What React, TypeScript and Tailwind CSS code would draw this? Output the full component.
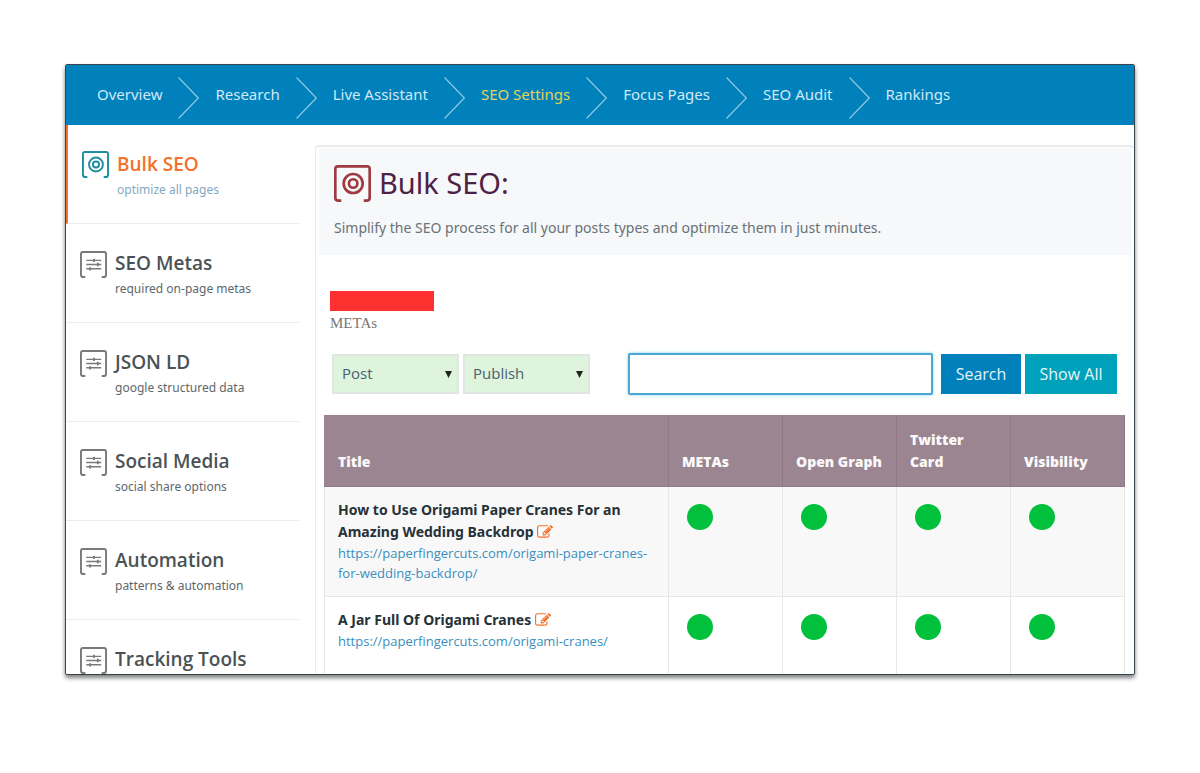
import { Fragment } from "react";
import { clsx } from "clsx";

const steps = ["Overview", "Research", "Live Assistant", "SEO Settings", "Focus Pages", "SEO Audit", "Rankings"];
const activeStep = "SEO Settings";

const sections = [
  { title: "Bulk SEO", note: "optimize all pages", active: true },
  { title: "SEO Metas", note: "required on-page metas" },
  { title: "JSON LD", note: "google structured data" },
  { title: "Social Media", note: "social share options" },
  { title: "Automation", note: "patterns & automation" },
  { title: "Tracking Tools" },
];

const checks = ["METAs", "Open Graph", "Twitter Card", "Visibility"];

const posts = [
  {
    title: "How to Use Origami Paper Cranes For an Amazing Wedding Backdrop",
    url: "https://paperfingercuts.com/origami-paper-cranes-for-wedding-backdrop/",
  },
  { title: "A Jar Full Of Origami Cranes", url: "https://paperfingercuts.com/origami-cranes/" },
];

function Chevron() {
  return (
    <svg className="h-[42px] w-[21px] shrink-0" viewBox="0 0 21 42" fill="none" stroke="#8cc6e0" strokeWidth="1.200" aria-hidden="true">
      <path d="M0.5 0.5 L20.3 21 L0.5 41.5" />
    </svg>
  );
}

function TargetIcon({ className }: { className: string }) {
  return (
    <svg className={className} viewBox="0 0 28 28" fill="none" stroke="currentColor" aria-hidden="true">
      <path d="M5.500 27H3.500Q1 27 1 24.500V3Q1 1 3 1H25Q27 1 27 3V24.500Q27 27 24.500 27H22.500" strokeWidth="2" />
      <circle cx="14.500" cy="14" r="7.200" strokeWidth="2" />
      <circle cx="14.500" cy="14" r="3.200" strokeWidth="2" />
    </svg>
  );
}

function SlidersIcon({ className }: { className: string }) {
  return (
    <svg className={className} viewBox="0 0 28 28" fill="none" stroke="currentColor" aria-hidden="true">
      <path d="M5.500 27H3.500Q1 27 1 24.500V3Q1 1 3 1H25Q27 1 27 3V24.500Q27 27 24.500 27H22.500" strokeWidth="2" />
      <path d="M6.500 9.700H22M6.500 14H22M6.500 18.500H22" strokeWidth="1.500" />
      <path d="M14.500 8V11.500M18.500 12.300V15.800M10.500 16.800V20.300" strokeWidth="1.900" />
    </svg>
  );
}

function EditIcon() {
  return (
    <svg className="inline-block size-4 align-[-3px]" viewBox="0 0 1792 1792" fill="currentColor" aria-hidden="true">
      <path d="M888 1184l116-116-152-152-116 116v56h96v96h56zm440-720q-16-16-33 1l-350 350q-17 17-1 33t33-1l350-350q17-17 1-33zm80 594v190q0 119-84.500 203.500t-203.500 84.500h-832q-119 0-203.500-84.500t-84.500-203.500v-832q0-119 84.500-203.500t203.500-84.500h832q63 0 117 25 15 7 18 23 3 17-9 29l-49 49q-14 14-32 8-23-6-45-6h-832q-66 0-113 47t-47 113v832q0 66 47 113t113 47h832q66 0 113-47t47-113v-126q0-13 9-22l64-64q15-15 35-7t20 29zm-96-738l288 288-672 672h-288v-288zm444 132l-92 92-288-288 92-92q28-28 68-28t68 28l152 152q28 28 28 68t-28 68z" />
    </svg>
  );
}

function Picker({ label, options }: { label: string; options: string[] }) {
  return (
    <div className="grid w-[127px] items-center">
      <select
        aria-label={label}
        className="col-start-1 row-start-1 h-10 w-full appearance-none border-2 border-[#e0e6e0] bg-[#def4dd] pb-[2px] pl-2 text-[15px] text-[#4b6070]"
      >
        {options.map((option) => (
          <option key={option}>{option}</option>
        ))}
      </select>
      <svg className="pointer-events-none col-start-1 row-start-1 mr-[7px] h-[7px] w-[7px] justify-self-end" viewBox="0 0 7 7" fill="#222" aria-hidden="true">
        <path d="M0 0H7L3.500 7Z" />
      </svg>
    </div>
  );
}

export default function App() {
  return (
    <div className="flex h-screen flex-col bg-white px-[65px] pt-16 pb-[98px] font-['Open_Sans',sans-serif]">
      <div className="flex min-h-0 flex-1 flex-col overflow-hidden rounded-xs border border-[#38444c] bg-white shadow-[0_3px_4px_rgba(0,0,0,0.5)]">
        <nav
          aria-label="Steps"
          className="flex h-[60px] shrink-0 items-center gap-4 overflow-hidden bg-[#0081bb] pl-[31px] font-['Noto_Sans',sans-serif] text-[15px] text-[#cfe9f5]"
        >
          {steps.map((step, i) => (
            <Fragment key={step}>
              {i > 0 && (
                <div className="pt-[6px]">
                  <Chevron />
                </div>
              )}
              <a href="#" className={clsx("pb-[2px] whitespace-nowrap", step === activeStep && "text-[#e2d35a]")}>
                {step}
              </a>
            </Fragment>
          ))}
        </nav>

        <div className="flex min-h-0 flex-1">
          <aside className="w-[233px] shrink-0">
            {sections.map(({ title, note, active }) => (
              <a
                key={title}
                href="#"
                className={clsx(
                  "flex h-[99px] gap-2 border-b border-b-[#ececec] pt-[25px] pl-[14px]",
                  active && "border-l-2 border-l-[#f5702a]",
                )}
              >
                {active ? (
                  <TargetIcon className="mt-px size-[27px] shrink-0 text-[#1d8fa0]" />
                ) : (
                  <SlidersIcon className="mt-[2px] size-[27px] shrink-0 text-[#7a7a7a]" />
                )}
                <span className="flex flex-col">
                  <span className={clsx("text-[19px] leading-7 font-semibold", active ? "text-[#f5702a]" : "text-[#4a5256]")}>
                    {title}
                  </span>
                  {note && (
                    <span className={clsx("font-['Noto_Sans',sans-serif] text-[12px] leading-6", active ? "text-[#83a8c0]" : "text-[#5d676b]")}>
                      {note}
                    </span>
                  )}
                </span>
              </a>
            ))}
          </aside>

          <main className="mt-5 ml-4 min-w-0 flex-1 rounded-t-sm border-t-2 border-l border-[#ebebeb] px-[3px] pt-px">
            <header className="h-[107px] bg-[#f7f8fa] pt-[15px] pl-[15px] font-['Noto_Sans',sans-serif]">
              <h1 className="flex items-center gap-2 text-[29px] leading-10 text-[#4d2245]">
                <TargetIcon className="size-[37px] text-[#9e3a40]" />
                Bulk SEO:
              </h1>
              <p className="mt-[13px] text-[14px] leading-6 text-[#687276]">
                Simplify the SEO process for all your posts types and optimize them in just minutes.
              </p>
            </header>

            <section className="pt-9 pr-[6px] pl-[5px]">
              <div className="ml-[6px] h-5 w-[104px] bg-[#ff3030]" />
              <p className="mt-[2px] ml-[6px] font-['Liberation_Serif',serif] text-[15px] leading-5 text-[#777]">METAs</p>

              <form className="mt-5 mr-2 ml-2 flex h-[42px] items-center gap-1" onSubmit={(e) => e.preventDefault()}>
                <Picker label="Post type" options={["Post", "Page"]} />
                <Picker label="Post status" options={["Publish", "Draft"]} />
                <input
                  type="text"
                  aria-label="Search posts"
                  className="mr-1 ml-[34px] h-[42px] min-w-0 flex-1 rounded-xs border-2 border-[#4aa9d4] bg-white px-3 text-[15px] shadow-[0_0_3px_#7fd0ee] outline-none"
                />
                <button type="submit" className="h-10 w-20 bg-[#0081bb] text-[16px] text-[#e4f3fa]">
                  Search
                </button>
                <button type="button" className="h-10 w-[92px] bg-[#00a2bb] text-[16px] text-[#e4f6fa]">
                  Show All
                </button>
              </form>

              <table className="mt-5 w-full table-fixed border-separate border-spacing-0 text-left text-[14px]">
                <thead>
                  <tr className="h-[72px] bg-[#9b8590] align-bottom leading-[22px] text-[#fbf9fa]">
                    <th className="border-r border-b border-[#8f7985] px-[14px] pb-[13px] font-extrabold">Title</th>
                    {checks.map((check) => (
                      <th key={check} className="w-[114px] border-r border-b border-[#8f7985] px-[13px] pb-[13px] font-extrabold">
                        {check === "Twitter Card" ? <span className="block w-min">{check}</span> : check}
                      </th>
                    ))}
                  </tr>
                </thead>
                <tbody>
                  {posts.map((post) => (
                    <tr key={post.url} className="h-[110px] align-top odd:bg-[#f9f8f9]">
                      <td className="border-r border-b border-l border-[#e6e8e8] px-[13px] pt-3">
                        <p className="font-['Noto_Sans',sans-serif] leading-[22px] font-bold text-[#263238]">
                          {post.title}{" "}
                          <button type="button" aria-label={`Edit ${post.title}`} className="align-top leading-[22px] text-[#f5702a]">
                            <EditIcon />
                          </button>
                        </p>
                        <a href={post.url} className="block text-[13px] leading-5 text-[#3a8fbd]">
                          {post.url}
                        </a>
                      </td>
                      {checks.map((check) => (
                        <td key={check} className="border-r border-b border-[#e6e8e8] pt-[17px] pl-[18px]">
                          <span role="img" aria-label={`${check} passed`} className="block size-[26px] rounded-full bg-[#00c03c]" />
                        </td>
                      ))}
                    </tr>
                  ))}
                </tbody>
              </table>
            </section>
          </main>
        </div>
      </div>
    </div>
  );
}
